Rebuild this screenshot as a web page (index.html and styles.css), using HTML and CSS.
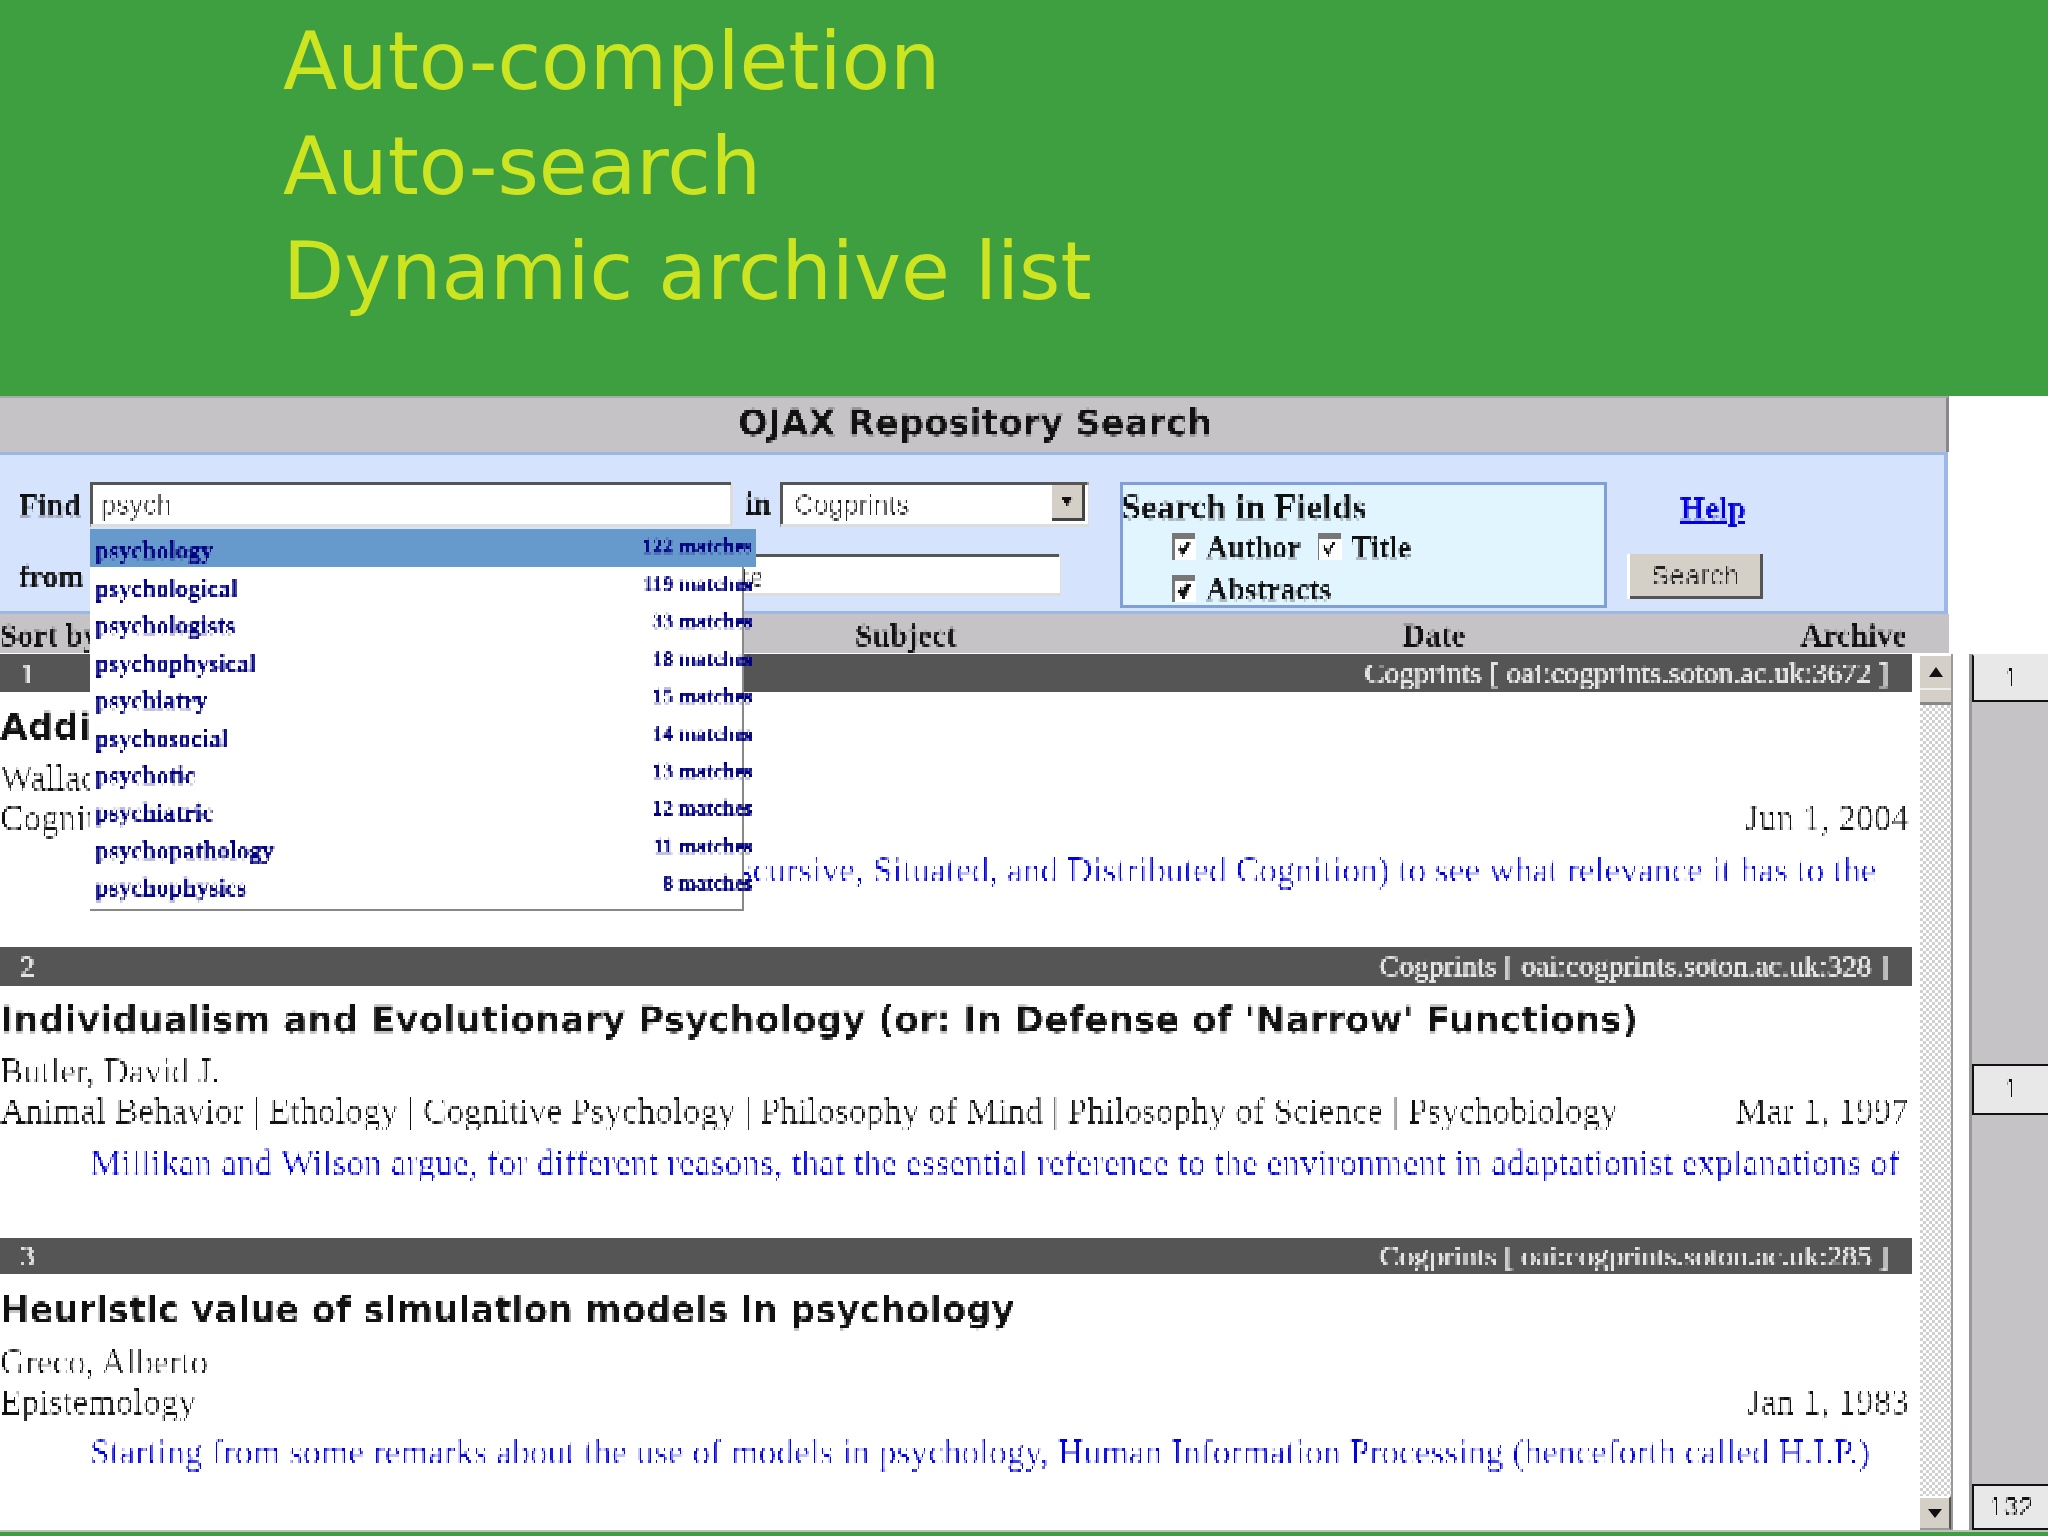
FILE: index.html
```html
<!DOCTYPE html>
<html lang="en">
<head>
<meta charset="utf-8">
<title>OJAX Repository Search</title>
<link rel="stylesheet" href="styles.css">
</head>
<body>
<svg class="defs" width="0" height="0" aria-hidden="true">
  <filter id="lowres" x="0" y="0" width="100%" height="100%" color-interpolation-filters="sRGB">
    <feFlood x="0" y="0" width="1" height="1" flood-color="#000"/>
    <feComposite width="2" height="3"/>
    <feTile result="dots"/>
    <feComposite in="SourceGraphic" in2="dots" operator="in"/>
    <feMorphology operator="dilate" radius="1 1"/>
  </filter>
</svg>
<div class="page">
  <header class="hero">
    <p>Auto-completion</p>
    <p>Auto-search</p>
    <p>Dynamic archive list</p>
  </header>

  <section class="app-head">
    <h1 class="app-title">OJAX Repository Search</h1>
    <div class="form-panel">
      <div class="query">
        <div class="query-row">
          <label class="lbl">Find</label>
          <div class="input input-find">psych</div>
          <label class="lbl lbl-in">in</label>
          <div class="input input-select">Cogprints
            <span class="select-btn"><svg width="14" height="12" viewBox="0 0 14 12"><path d="M1 1h12L7 11z" fill="#111"/></svg></span>
          </div>
        </div>
        <div class="query-row query-row-2">
          <label class="lbl">from</label>
          <div class="input input-from"><span class="from-val">date</span></div>
        </div>
      </div>
      <div class="fields">
        <div class="fields-title">Search in Fields</div>
        <div class="fields-row">
          <span class="check"><svg width="19" height="18" viewBox="0 0 19 18"><path d="M4 7l4 6 6-11" fill="none" stroke="#111" stroke-width="4"/></svg></span>
          <span class="check-lbl">Author</span>
          <span class="check check-2"><svg width="19" height="18" viewBox="0 0 19 18"><path d="M4 6l4 8 6-12" fill="none" stroke="#111" stroke-width="3"/></svg></span>
          <span class="check-lbl check-lbl-2">Title</span>
        </div>
        <div class="fields-row fields-row-2">
          <span class="check"><svg width="19" height="18" viewBox="0 0 19 18"><path d="M4 7l4 6 6-11" fill="none" stroke="#111" stroke-width="6"/></svg></span>
          <span class="check-lbl">Abstracts</span>
        </div>
      </div>
      <div class="actions">
        <a class="help" href="#">Help</a>
        <button class="search-btn" type="button">Search</button>
      </div>
    </div>
    <div class="sort-row">
      <span class="sort-by">Sort by</span>
      <span class="sort-subject">Subject</span>
      <span class="sort-date">Date</span>
      <span class="sort-archive">Archive</span>
    </div>
  </section>

  <div class="suggest">
    <div class="suggest-row suggest-on"><span>psychology</span><em>122 matches</em></div>
    <div class="suggest-row"><span>psychological</span><em>119 matches</em></div>
    <div class="suggest-row"><span>psychologists</span><em>33 matches</em></div>
    <div class="suggest-row"><span>psychophysical</span><em>18 matches</em></div>
    <div class="suggest-row"><span>psychiatry</span><em>15 matches</em></div>
    <div class="suggest-row"><span>psychosocial</span><em>14 matches</em></div>
    <div class="suggest-row"><span>psychotic</span><em>13 matches</em></div>
    <div class="suggest-row"><span>psychiatric</span><em>12 matches</em></div>
    <div class="suggest-row"><span>psychopathology</span><em>11 matches</em></div>
    <div class="suggest-row"><span>psychophysics</span><em>8 matches</em></div>
  </div>

  <main class="body">
    <div class="results">
      <article class="item">
        <div class="bar"><span>1</span><span>Cogprints [ oai:cogprints.soton.ac.uk:3672 ]</span></div>
        <h2 class="item-title">Addiction</h2>
        <div class="item-author">Wallace, Barbara</div>
        <div class="item-meta"><span>Cognitive Psychology</span><span>Jun 1, 2004</span></div>
        <p class="item-abs">I look at the fine broad notion of the DSC (Discursive, Situated, and Distributed Cognition) to see what relevance it has to the</p>
      </article>
      <article class="item">
        <div class="bar"><span>2</span><span>Cogprints [ oai:cogprints.soton.ac.uk:328 ]</span></div>
        <h2 class="item-title">Individualism and Evolutionary Psychology (or: In Defense of 'Narrow' Functions)</h2>
        <div class="item-author">Butler, David J.</div>
        <div class="item-meta"><span>Animal Behavior | Ethology | Cognitive Psychology | Philosophy of Mind | Philosophy of Science | Psychobiology</span><span>Mar 1, 1997</span></div>
        <p class="item-abs">Millikan and Wilson argue, for different reasons, that the essential reference to the environment in adaptationist explanations of</p>
      </article>
      <article class="item">
        <div class="bar bar-short"><span>3</span><span>Cogprints [ oai:cogprints.soton.ac.uk:285 ]</span></div>
        <h2 class="item-title">Heuristic value of simulation models in psychology</h2>
        <div class="item-author">Greco, Alberto</div>
        <div class="item-meta"><span>Epistemology</span><span>Jan 1, 1983</span></div>
        <p class="item-abs">Starting from some remarks about the use of models in psychology, Human Information Processing (henceforth called H.I.P.)</p>
      </article>
    </div>
    <div class="scrollbar">
      <div class="sb-btn"><svg width="16" height="12" viewBox="0 0 16 12"><path d="M8 1l7 10H1z" fill="#111"/></svg></div>
      <div class="sb-thumb"></div>
      <div class="sb-track"></div>
      <div class="sb-btn sb-btn-down"><svg width="16" height="12" viewBox="0 0 16 12"><path d="M1 2h14l-7 9z" fill="#111"/></svg></div>
    </div>
    <aside class="rail">
      <div class="rail-box"><span>1</span></div>
      <div class="rail-box rail-box-mid"><span>1</span></div>
      <div class="rail-box rail-box-end"><span>132</span></div>
    </aside>
  </main>
  <div class="foot"></div>
</div>
</body>
</html>
```

FILE: styles.css
```css
* { box-sizing: border-box; }
html, body { margin: 0; padding: 0; background: #fff; }
.defs { position: absolute; }
.page {
  position: relative;
  width: 2048px;
  height: 1536px;
  overflow: hidden;
  font-family: "Liberation Serif", serif;
  color: #111;
}

/* Low-resolution capture look of the embedded app */
.app-head, .suggest, .results, .rail-box span { filter: url(#lowres); }

/* Slide heading */
.hero {
  height: 396px;
  background: #3e9f40;
  padding: 9px 0 0 283px;
  color: #cde520;
  font-family: "DejaVu Sans", sans-serif;
  font-size: 79.4px;
  line-height: 105px;
}
.hero p { margin: 0; }

/* App header */
.app-head { width: 1949px; }
.app-title {
  margin: 0;
  height: 57px;
  padding-left: 4px;
  background: #c5c3c6;
  border-top: 1px solid #aaa;
  border-right: 3px solid #888;
  text-align: center;
  font-family: "DejaVu Sans", sans-serif;
  font-size: 35.3px;
  font-weight: bold;
  line-height: 51px;
  -webkit-text-stroke: 0.3px #111;
}
.form-panel {
  display: flex;
  height: 161px;
  padding-top: 26px;
  background: #d5e3fd;
  border-style: solid;
  border-width: 3px 3px 3px 0;
  border-color: #9db8e6;
  margin-right: 2px;
}
.query { width: 1120px; }
.query-row { display: flex; align-items: center; height: 44px; }
.query-row-2 { margin-top: 27px; }
.lbl {
  width: 90px;
  padding: 3px 0 0 19px;
  font-size: 31px;
  font-weight: bold;
  -webkit-text-stroke: 0.6px #111;
}
.lbl-in { width: 47px; padding: 0 0 0 12px; }
.input {
  height: 44px;
  background: #fff;
  border-style: solid;
  border-width: 3px;
  border-color: #555 #ddd #ddd #555;
  font-family: "Liberation Sans", sans-serif;
  font-size: 27px;
  line-height: 40px;
  color: #222;
}
.input-find { width: 643px; padding-left: 8px; }
.input-select {
  position: relative;
  width: 310px;
  padding-left: 11px;
}
.select-btn {
  position: absolute;
  right: 2px;
  top: 0;
  display: flex;
  align-items: center;
  justify-content: center;
  width: 34px;
  height: 36px;
  background: #d4d0c8;
  border-bottom: 3px solid #444;
  border-right: 3px solid #444;
}
.input-from { width: 972px; padding-left: 620px; }
.from-val { font-family: "Liberation Serif", serif; font-size: 30px; }

/* Search in Fields */
.fields {
  width: 487px;
  height: 127px;
  overflow: hidden;
  background: #e0f5ff;
  border: 3px solid #7f9fd6;
  font-size: 36px;
  font-weight: bold;
  line-height: 44px;
  -webkit-text-stroke: 0.6px #111;
}
.fields-title { height: 44px; margin-left: -2px; }
.fields-row {
  display: flex;
  align-items: center;
  height: 36px;
  padding-left: 49px;
  font-size: 30.5px;
}
.fields-row-2 { margin-top: 6px; }
.check {
  display: block;
  width: 24px;
  height: 26px;
  background: #fff;
  border-top: 6px solid #777;
  border-left: 3px solid #777;
}
.check svg { display: block; }
.check-lbl { margin: 2px 0 0 10px; }
.check-2 { margin-left: 16px; }

/* Help + button */
.actions { width: 135px; margin-left: 21px; }
.help {
  display: block;
  height: 71px;
  padding-left: 52px;
  color: #0000e0;
  font-size: 32px;
  font-weight: bold;
  line-height: 52px;
  -webkit-text-stroke: 0.6px #0000e0;
}
.search-btn {
  display: block;
  width: 135px;
  height: 47px;
  padding: 0;
  background: #d4d0c8;
  border-style: solid;
  border-width: 2px 3px 4px 2px;
  border-color: #fff #555 #555 #fff;
  color: #222;
  font-family: "Liberation Sans", sans-serif;
  font-size: 28px;
}

/* Sort headings */
.sort-row {
  display: flex;
  height: 40px;
  background: #c5c3c6;
  font-size: 31.5px;
  font-weight: bold;
  line-height: 44px;
  -webkit-text-stroke: 0.6px #111;
}
.sort-subject { margin-left: 756px; }
.sort-date { margin-left: 446px; }
.sort-archive { margin-left: 335px; }

/* Suggestion dropdown */
.suggest {
  position: absolute;
  z-index: 2;
  left: 90px;
  top: 529px;
  width: 666px;
  height: 378px;
}
.suggest::before {
  content: "";
  position: absolute;
  z-index: -1;
  left: 0;
  top: 0;
  width: 651px;
  height: 376px;
  background: #fff;
  border-top: 3px solid #777;
  border-right: 3px solid #888;
  border-bottom: 3px solid #888;
}
.suggest-row {
  display: flex;
  justify-content: space-between;
  width: 666px;
  height: 37.4px;
  padding: 7px 4px 0 5px;
  color: #000080;
  font-size: 25px;
  font-weight: bold;
  line-height: 30px;
  -webkit-text-stroke: 0.7px #000080;
}
.suggest-row em {
  margin-top: -5px;
  font-size: 21px;
  font-style: normal;
}
.suggest-on { height: 38px; background: #6699cc; }

/* Results */
.body { display: flex; height: 876px; }
.results { width: 1912px; height: 876px; overflow: hidden; background: #fff; }
.item { height: 292.5px; }
.bar {
  display: flex;
  justify-content: space-between;
  height: 38px;
  padding: 0 23px 0 20px;
  background: #555;
  color: #e4e4e4;
  font-size: 29.7px;
  line-height: 38px;
}
.bar-short { height: 35px; line-height: 35px; }
.item-title {
  margin: 12px 0 0;
  height: 44px;
  font-family: "DejaVu Sans", sans-serif;
  font-size: 35.8px;
  font-weight: bold;
  line-height: 45px;
  -webkit-text-stroke: 0.3px #111;
}
.bar-short + .item-title { margin-top: 14px; font-size: 35.3px; line-height: 44px; }
.item-author {
  margin-top: 12px;
  height: 40px;
  font-size: 35px;
  line-height: 38px;
}
.item-meta {
  display: flex;
  justify-content: space-between;
  height: 40px;
  padding-right: 3px;
  font-size: 35.3px;
  line-height: 38px;
}
.item-abs {
  margin: 11px 0 0;
  padding-left: 90px;
  white-space: nowrap;
  overflow: hidden;
  color: #0000e0;
  font-size: 35.5px;
  line-height: 38px;
}
.bar-short ~ .item-abs { margin-top: 9px; }

/* Scrollbar */
.scrollbar {
  display: flex;
  flex-direction: column;
  width: 33px;
  margin-left: 8px;
  border-right: 2px solid #999;
}
.sb-btn {
  display: flex;
  align-items: center;
  justify-content: center;
  height: 34px;
  background: #d4d0c8;
  border-top: 2px solid #fff;
}
.sb-btn-down { border-right: 2px solid #555; border-bottom: 2px solid #999; }
.sb-thumb {
  height: 17px;
  background: #d4d0c8;
  border-top: 2px solid #eee;
  border-bottom: 3px solid #888;
}
.sb-track {
  flex: 1;
  background: repeating-conic-gradient(#d0d0d0 0 25%, #fff 0 50%) 0 0 / 6px 6px;
}

/* Right-hand rail */
.rail {
  flex: 1;
  display: flex;
  flex-direction: column;
  margin-left: 16px;
  background: #c5c3c6;
  border-left: 3px solid #999;
}
.rail-box {
  display: flex;
  align-items: center;
  justify-content: center;
  height: 48px;
  background: #e8e8e8;
  border: 2px solid #111;
  border-right: 0;
  border-top-color: #e8e8e8;
  font-family: "Liberation Sans", sans-serif;
  font-size: 27px;
  color: #111;
}
.rail-box span { background: #e8e8e8; }
.rail-box-mid { height: 51px; margin-top: 362px; border-top-color: #111; }
.rail-box-end { height: 46px; margin-top: auto; border-top-color: #111; }

.foot {
  height: 6px;
  background: #3e9f40;
  border-top: 2px solid #b8c4b8;
}
```
